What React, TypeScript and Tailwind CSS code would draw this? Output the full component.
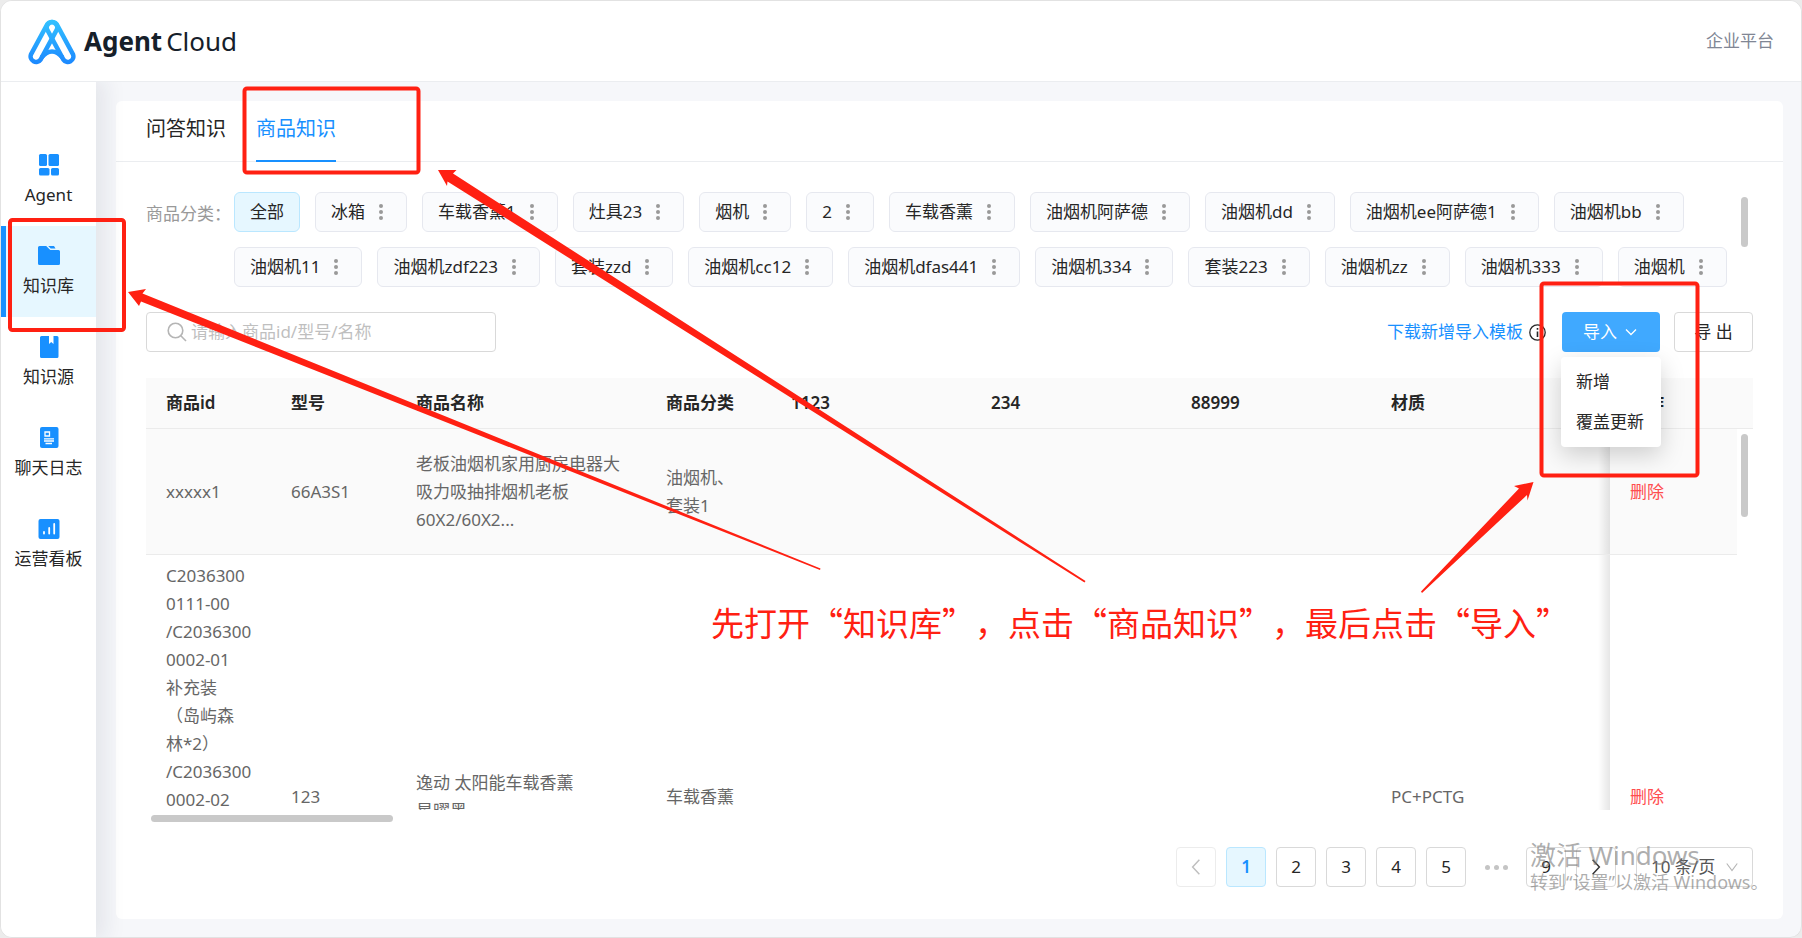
import { useState, type ReactNode } from "react";

const menu = [
  { key: "agent", label: "Agent", icon: <AgentIcon /> },
  { key: "base", label: "知识库", icon: <FolderIcon /> },
  { key: "source", label: "知识源", icon: <BookIcon /> },
  { key: "log", label: "聊天日志", icon: <LogIcon /> },
  { key: "board", label: "运营看板", icon: <BoardIcon /> },
];

const tabs = ["问答知识", "商品知识"];

const categories = [
  "全部",
  "冰箱",
  "车载香薰1",
  "灶具23",
  "烟机",
  "2",
  "车载香薰",
  "油烟机阿萨德",
  "油烟机dd",
  "油烟机ee阿萨德1",
  "油烟机bb",
  "油烟机11",
  "油烟机zdf223",
  "套装zzd",
  "油烟机cc12",
  "油烟机dfas441",
  "油烟机334",
  "套装223",
  "油烟机zz",
  "油烟机333",
  "油烟机",
];

const columns = [
  { title: "商品id", width: "w-[125px]" },
  { title: "型号", width: "w-[125px]" },
  { title: "商品名称", width: "w-[250px]" },
  { title: "商品分类", width: "w-[125px]" },
  { title: "1123", width: "w-[200px]" },
  { title: "234", width: "w-[200px]" },
  { title: "88999", width: "w-[200px]" },
  { title: "材质", width: "" },
  { title: "操作", width: "w-[127px]" },
];

const rows = [
  {
    id: "xxxxx1",
    model: "66A3S1",
    name: "老板油烟机家用厨房电器大\n吸力吸抽排烟机老板\n60X2/60X2...",
    category: "油烟机、\n套装1",
    material: "",
    active: true,
  },
  {
    id: "C2036300\n0111-00\n/C2036300\n0002-01\n补充装\n（岛屿森\n林*2）\n/C2036300\n0002-02",
    model: "123",
    name: "逸动 太阳能车载香薰\n星曜黑",
    category: "车载香薰",
    material: "PC+PCTG",
    active: false,
  },
];

function Logo() {
  return (
    <svg width="48" height="46" viewBox="0 0 48 46" fill="none" className="mt-0.5" aria-hidden="true">
      <defs>
        <linearGradient id="logo" x1="24" y1="0" x2="24" y2="46" gradientUnits="userSpaceOnUse">
          <stop stopColor="#33c3ff" />
          <stop offset="1" stopColor="#1b87ff" />
        </linearGradient>
      </defs>
      <g stroke="url(#logo)" strokeWidth="4.5" strokeLinejoin="round">
        <path d="M19.2 5.4 3 35.4A5.5 5.5 0 0 0 12.6 40.6L28.8 10.6A5.5 5.5 0 0 0 19.2 5.4Z" />
        <path d="M28.8 5.4 45 35.4A5.5 5.5 0 0 1 35.4 40.6L19.2 10.6A5.5 5.5 0 0 1 28.8 5.4Z" />
        <path d="M13.5 38.5Q24 26.5 34.5 38.5" />
      </g>
    </svg>
  );
}

function AgentIcon() {
  return (
    <svg width="22" height="22" viewBox="0 0 22 22" fill="#1890ff" aria-hidden="true">
      <rect x="1" y="0" width="8" height="12" rx="1.5" />
      <rect x="10.5" y="0" width="10.5" height="12" rx="1.5" />
      <rect x="1" y="14" width="10.5" height="7.5" rx="1.5" />
      <rect x="13" y="14" width="8" height="7.5" rx="1.5" />
    </svg>
  );
}

function FolderIcon() {
  return (
    <svg width="22" height="22" viewBox="0 0 22 22" fill="#1890ff" aria-hidden="true">
      <path d="M1.5 1H8.2L12.3 5H20.5Q22 5 22 6.5V18.5Q22 20 20.5 20H1.5Q0 20 0 18.5V2.5Q0 1 1.5 1Z" />
      <path d="M10.2 1H16L17.5 3.6H12.7Z" />
    </svg>
  );
}

function BookIcon() {
  return (
    <svg width="22" height="22" viewBox="0 0 22 22" fill="#1890ff" aria-hidden="true">
      <path d="M3.5 0H11V8L13.2 6 15.5 8V0H19Q20.5 0 20.5 1.5V20.5Q20.5 22 19 22H3.5Q2 22 2 20.5V1.5Q2 0 3.5 0Z" />
    </svg>
  );
}

function LogIcon() {
  return (
    <svg width="22" height="22" viewBox="0 0 22 22" fill="none" aria-hidden="true">
      <rect x="2" y="0" width="18.5" height="21" rx="2" fill="#1890ff" />
      <path d="M7 5H11.5V9H7ZM6 11.8H16M6 14H16M7.5 16.5H14" stroke="#fff" strokeWidth="1.3" />
    </svg>
  );
}

function BoardIcon() {
  return (
    <svg width="22" height="22" viewBox="0 0 22 22" fill="none" aria-hidden="true">
      <rect x="0.5" y="1" width="21" height="20" rx="2" fill="#1890ff" />
      <path d="M6 14V15.5M11.2 10V15.5M16.2 6V15.5" stroke="#fff" strokeWidth="1.8" strokeLinecap="round" />
    </svg>
  );
}

function MoreIcon() {
  return (
    <svg width="18" height="18" viewBox="0 0 18 18" fill="#999" aria-hidden="true">
      <circle cx="8" cy="3" r="2" />
      <circle cx="8" cy="9" r="2" />
      <circle cx="8" cy="15" r="2" />
    </svg>
  );
}

function Chevron({ d, size, color }: { d: string; size: number; color: string }) {
  return (
    <svg width={size} height={size} viewBox="0 0 16 16" fill="none" stroke={color} strokeWidth="1.3" aria-hidden="true">
      <path d={d} />
    </svg>
  );
}

function Header() {
  return (
    <header className="relative z-20 flex h-[81px] shrink-0 items-center justify-between border-b border-[#ebedf0] bg-white px-[27px]">
      <a href="#" className="flex items-center gap-2 text-[26px] leading-8 text-[#16202a]">
        <Logo />
        <span className="flex gap-1">
          <strong className="font-bold">Agent</strong>
          <span>Cloud</span>
        </span>
      </a>
      <a href="#" className="text-[#808694]">
        企业平台
      </a>
    </header>
  );
}

function Sidebar() {
  return (
    <nav className="z-10 w-[95px] shrink-0 bg-white pt-[53px] shadow-[6px_0_20px_4px_rgba(30,35,60,0.08)]">
      {menu.map((m) => (
        <a
          key={m.key}
          href={`#${m.key}`}
          className={`flex h-[91px] flex-col items-center gap-[7px] border-l-[5px] pt-[19px] pr-[5px] whitespace-nowrap ${
            m.key === "base" ? "border-[#1890ff] bg-[#e6f7ff]" : "border-transparent"
          }`}
        >
          {m.icon}
          <span>{m.label}</span>
        </a>
      ))}
    </nav>
  );
}

function Categories() {
  const [selected, setSelected] = useState("全部");

  return (
    <section className="flex pt-[30px] pl-[30px]">
      <span className="w-[88px] shrink-0 pt-2.5 text-[#999]">商品分类：</span>
      <div className="flex h-[110px] flex-1 flex-wrap content-start gap-[15px] overflow-hidden">
        {categories.map((c) => (
          <button
            key={c}
            onClick={() => setSelected(c)}
            className={`flex h-10 items-center gap-2 rounded-md border px-[15px] ${
              c === selected ? "border-[#bae7ff] bg-[#e6f7ff]" : "border-[#e6e8ef] bg-[#fafbfd]"
            }`}
          >
            {c}
            {c !== "全部" && <MoreIcon />}
          </button>
        ))}
      </div>
      <div className="mt-[5px] mr-[35px] ml-2 h-[50px] w-[7px] rounded-full bg-[#c9c9c9]" />
    </section>
  );
}

function Toolbar() {
  return (
    <section className="mt-2.5 flex items-center px-[30px]">
      <label className="flex h-10 w-[350px] items-center gap-1 rounded-sm border border-[#d9d9d9] px-5">
        <svg width="20" height="20" viewBox="0 0 20 20" fill="none" stroke="#b5b5b5" strokeWidth="1.6" aria-hidden="true">
          <circle cx="8.5" cy="8.5" r="7.3" />
          <path d="M13.8 13.8 19 19" />
        </svg>
        <input
          aria-label="搜索商品"
          placeholder="请输入商品id/型号/名称"
          className="min-w-0 flex-1 outline-none placeholder:text-[#bfbfbf]"
        />
      </label>
      <a href="#template" className="ml-auto text-[#1890ff]">
        下载新增导入模板
      </a>
      <svg width="17" height="17" viewBox="0 0 17 17" fill="none" stroke="#262626" strokeWidth="1.3" className="mr-4 ml-1.5" aria-hidden="true">
        <circle cx="8.5" cy="8.5" r="7.7" />
        <path d="M8.5 7.5V13M8.5 4V5.8" strokeWidth="1.6" />
      </svg>
      <div className="relative">
        <button className="flex h-10 w-[98px] items-center justify-center gap-1.5 rounded-sm bg-[#40a9ff] text-white">
          导入
          <Chevron d="M3 5.5 8 10.5 13 5.5" size={16} color="#fff" />
        </button>
        <div className="absolute top-[45px] -left-px z-20 flex w-[100px] flex-col rounded-sm bg-white py-[5px] shadow-[0_8px_24px_rgba(0,0,0,0.18)]">
          <button className="h-10 px-[15px] text-left">新增</button>
          <button className="h-10 px-[15px] text-left whitespace-nowrap">覆盖更新</button>
        </div>
      </div>
      <button className="ml-[14px] h-10 w-[79px] rounded-sm border border-[#d9d9d9] bg-white">导 出</button>
    </section>
  );
}

function Cell({ children, className = "" }: { children?: ReactNode; className?: string }) {
  return <td className={`border-b border-[#ebebeb] px-5 whitespace-pre-line ${className}`}>{children}</td>;
}

function ProductTable() {
  return (
    <section className="mt-[26px] flex min-h-0 flex-1 flex-col px-[30px]">
      <div className="flex min-h-0 flex-1 items-stretch">
        <div className="relative min-w-0 flex-1 overflow-hidden">
          <table className="w-full table-fixed border-separate border-spacing-0 text-left">
            <thead>
              <tr className="h-[51px]">
                {columns.map((c) => (
                  <th key={c.title} className={`border-b border-[#ebebeb] bg-[#fafafa] px-5 font-semibold ${c.width}`}>
                    {c.title}
                  </th>
                ))}
              </tr>
            </thead>
            <tbody className="leading-7 text-[#666]">
              {rows.map((r) => (
                <tr key={r.model} className={r.active ? "h-[126px] bg-[#fafafa]" : "h-[484px] bg-white"}>
                  <Cell className={r.active ? "" : "pt-[7px] align-top"}>{r.id}</Cell>
                  <Cell>{r.model}</Cell>
                  <Cell className="!pr-0">{r.name}</Cell>
                  <Cell>{r.category}</Cell>
                  <Cell />
                  <Cell />
                  <Cell />
                  <Cell>{r.material}</Cell>
                  <Cell className="relative before:absolute before:inset-y-0 before:-left-3 before:w-3 before:bg-linear-to-r before:from-transparent before:to-black/10">
                    <button className="text-[#ff4d4f]">删除</button>
                  </Cell>
                </tr>
              ))}
            </tbody>
          </table>
        </div>
        <div className="w-4 shrink-0">
          <div className="h-[51px] border-b border-[#ebebeb] bg-[#fafafa]" />
          <div className="mt-[5px] ml-1 h-[83px] w-[7px] rounded-full bg-[#c9c9c9]" />
        </div>
      </div>
      <div className="mt-[5px] ml-[5px] h-[7px] w-[242px] rounded-full bg-[#c9c9c9]" />
    </section>
  );
}

function Pagination() {
  const box = "flex h-10 w-10 items-center justify-center rounded-sm border";

  return (
    <div className="mt-[25px] mb-8 flex justify-end gap-2.5 px-[30px]">
      <button aria-label="上一页" className={`${box} border-[#ececec]`}>
        <Chevron d="M11 1.5 5 8 11 14.5" size={18} color="#bfbfbf" />
      </button>
      {["1", "2", "3", "4", "5"].map((p) => (
        <button
          key={p}
          className={`${box} ${p === "1" ? "border-[#bae7ff] bg-[#e6f7ff] font-semibold text-[#1890ff]" : "border-[#d9d9d9]"}`}
        >
          {p}
        </button>
      ))}
      <span className="flex w-10 items-center justify-center gap-1">
        <i className="h-[5px] w-[5px] rounded-full bg-[#c4c4c4]" />
        <i className="h-[5px] w-[5px] rounded-full bg-[#c4c4c4]" />
        <i className="h-[5px] w-[5px] rounded-full bg-[#c4c4c4]" />
      </span>
      <button className={`${box} border-[#d9d9d9]`}>9</button>
      <button aria-label="下一页" className={`${box} border-[#d9d9d9]`}>
        <Chevron d="M5 1.5 11 8 5 14.5" size={18} color="#333" />
      </button>
      <label className="relative ml-2.5 flex items-center">
        <select aria-label="每页条数" className="h-10 w-[117px] appearance-none rounded-sm border border-[#d9d9d9] bg-white pl-[14px] text-[#555]">
          <option>10 条/页</option>
        </select>
        <span className="pointer-events-none absolute right-[14px]">
          <Chevron d="M2 4 8 12 14 4" size={14} color="#b5b5b5" />
        </span>
      </label>
    </div>
  );
}

// Hand-drawn guide on top of the page: boxes, arrows and the hint text
function Guide() {
  return (
    <div className="pointer-events-none absolute inset-0 z-30 overflow-hidden">
      <svg width="1802" height="938" viewBox="0 0 1802 938" fill="none" className="absolute top-0 left-0" aria-hidden="true">
        <g stroke="#ff2012" strokeWidth="4">
          <rect x="10" y="220" width="114" height="110" rx="2.5" />
          <rect x="244.5" y="88.5" width="174" height="84" rx="2.5" />
          <rect x="1541.5" y="283.5" width="156" height="192" rx="2.5" />
        </g>
        <g fill="#ff2012">
          <path d="M128 292 146 289 142.5 293.5 820.5 568.5 820 570 141 301.5 139 306Z" />
          <path d="M438 170 456.5 170 453 173.5 1085.5 581 1084.5 582.5 447.5 181.5 447 186Z" />
          <path d="M1533.5 482 1514 486 1519 488.5 1421 591.5 1422 593 1527 495 1527.5 500.5Z" />
        </g>
      </svg>
      <p className="absolute top-[598px] left-[711px] font-['Noto_Sans_CJK_SC',sans-serif] text-[33px] leading-[48px] whitespace-nowrap text-[#ff2012] [text-spacing-trim:space-all]">
        先打开“知识库”，点击“商品知识”，最后点击“导入”
      </p>
      <div className="absolute top-[838px] left-[1530px] whitespace-nowrap text-[#777]/60">
        <p className="text-[26px] leading-[34px]">激活 Windows</p>
        <p className="text-lg leading-5">转到“设置”以激活 Windows。</p>
      </div>
    </div>
  );
}

export default function App() {
  const [tab, setTab] = useState("商品知识");

  return (
    <div
      lang="zh-CN"
      className="relative h-screen overflow-hidden bg-[#ececec] font-['Noto_Sans','Noto_Sans_CJK_SC',sans-serif] text-[17px] leading-6 text-[#262626]"
    >
      <div className="flex h-full flex-col overflow-hidden rounded-xl border border-[#e2e2e2] bg-[#f6f7fa]">
        <Header />
        <div className="flex min-h-0 flex-1">
          <Sidebar />
          <main className="mt-[19px] mr-[18px] mb-[18px] ml-5 flex min-w-0 flex-1 flex-col rounded-md bg-white">
            <div className="flex h-[61px] shrink-0 gap-[30px] border-b border-[#ebedf0] px-[30px] text-xl">
              {tabs.map((t) => (
                <button
                  key={t}
                  onClick={() => setTab(t)}
                  className={`-mb-px border-b-2 pb-1 ${
                    t === tab ? "border-[#1890ff] text-[#1890ff]" : "border-transparent"
                  }`}
                >
                  {t}
                </button>
              ))}
            </div>
            <Categories />
            <Toolbar />
            <ProductTable />
            <Pagination />
          </main>
        </div>
      </div>
      <Guide />
    </div>
  );
}
